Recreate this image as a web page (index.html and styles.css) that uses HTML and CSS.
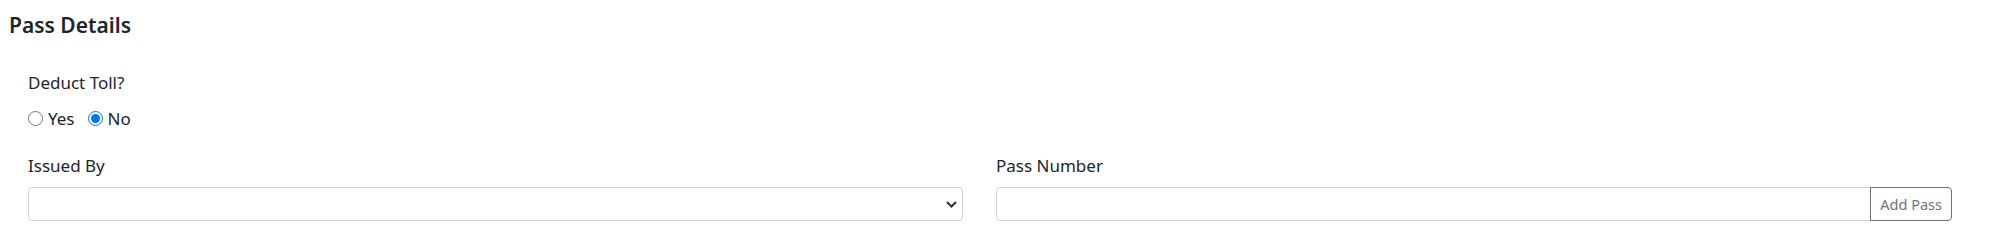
FILE: index.html
```html
<!DOCTYPE html>
<html lang="en">
  <head>
    <meta charset="UTF-8" />
    <meta name="viewport" content="width=device-width, initial-scale=1.0" />
    <title>Pass Details</title>
    <link rel="stylesheet" href="styles.css">
  </head>
  <body>
    <div class="card">
      <h5 class="card-title">Pass Details</h5>

      <div class="form-body">
        <div class="field">
          <label class="field-label">Deduct Toll?</label>
          <div class="radio-row">
            <label class="radio"><input type="radio" name="deduct" value="yes" /> Yes</label>
            <label class="radio"><input type="radio" name="deduct" value="no" checked /> No</label>
          </div>
        </div>

        <div class="row">
          <div class="field">
            <label class="field-label" for="issued-by">Issued By</label>
            <div class="select-wrap">
              <select id="issued-by" class="form-control">
                <option></option>
              </select>
              <svg class="chevron" width="11" height="7" viewBox="0 0 11 7">
                <path d="M1 1 L5.5 5.5 L10 1" fill="none" stroke="#333" stroke-width="2" />
              </svg>
            </div>
          </div>
          <div class="field">
            <label class="field-label" for="pass-number">Pass Number</label>
            <div class="input-group">
              <input id="pass-number" type="text" class="form-control" />
              <button class="btn-outline">Add Pass</button>
            </div>
          </div>
        </div>
      </div>
    </div>
  </body>
</html>
```

FILE: styles.css
```css
body {
  margin: 0;
  padding: 12px 9px;
  font-family: "Segoe UI", "Noto Sans", sans-serif;
  font-size: 17px;
  line-height: 1.5;
  color: #212529;
  background: white;
}
.card-title {
  margin: 0;
  font-size: 21px;
  font-weight: 600;
  line-height: 1.25;
}
.form-body {
  padding: 32px 0 0 19px;
}
.field-label {
  display: block;
}
.radio-row {
  display: flex;
  gap: 13px;
  margin-top: 10px;
}
.radio {
  display: flex;
  align-items: center;
  gap: 5px;
}
.radio input {
  width: 15px;
  height: 15px;
  margin: 0;
}
.row {
  display: grid;
  grid-template-columns: 935px 956px;
  column-gap: 33px;
  margin-top: 22px;
}
.row .field-label {
  margin-bottom: 8px;
}
.form-control {
  box-sizing: border-box;
  width: 100%;
  height: 34px;
  border: 1px solid #ced4da;
  border-radius: 4px;
  background: white;
  font-family: inherit;
  font-size: 15px;
  padding: 4px 10px;
}
select.form-control {
  appearance: none;
}
.select-wrap {
  position: relative;
}
.chevron {
  position: absolute;
  right: 6px;
  top: 14px;
}
.input-group {
  display: flex;
}
.input-group .form-control {
  flex: 1;
  border-radius: 4px 0 0 4px;
}
.btn-outline {
  box-sizing: border-box;
  height: 34px;
  padding: 0 9px;
  border: 1px solid #6c757d;
  border-radius: 0 4px 4px 0;
  margin-left: -1px;
  background: white;
  color: #6c757d;
  font-family: inherit;
  font-size: 14.5px;
  cursor: pointer;
}
```
